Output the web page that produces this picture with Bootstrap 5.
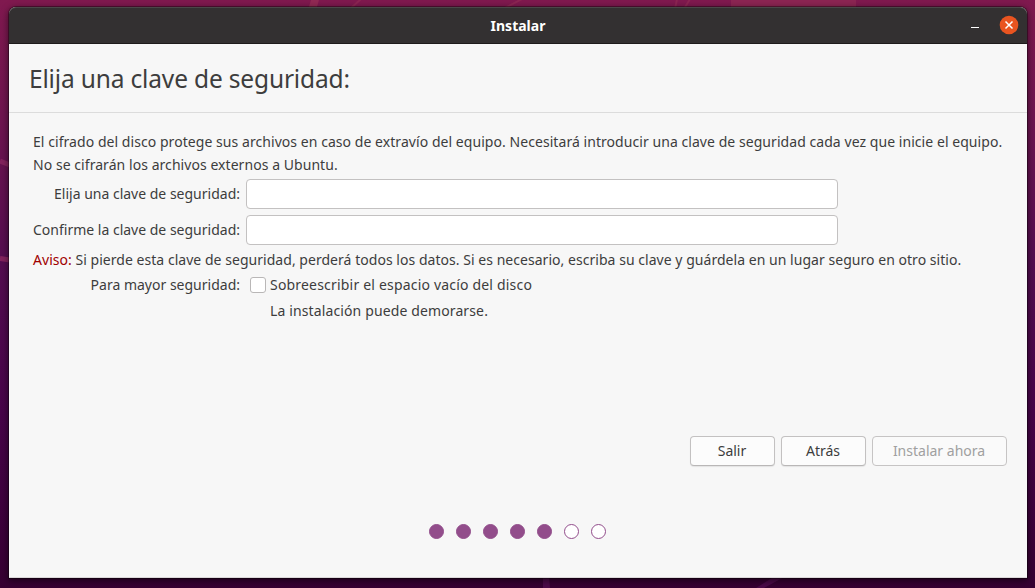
<!DOCTYPE html>
<html lang="es">
<head>
<meta charset="utf-8">
<meta name="viewport" content="width=device-width, initial-scale=1">
<title>Instalar</title>
<link href="https://cdn.jsdelivr.net/npm/bootstrap@5.3.0/dist/css/bootstrap.min.css" rel="stylesheet">
<style>
  body { height: 588px; padding: 7px 8px 10px 9px; font: 14px/23px "Noto Sans", "Open Sans", sans-serif; color: #3d3d3d; background: #35002f; }
  .wallpaper { inset: 0; width: 1035px; height: 588px; }
  .installer { background: #f7f7f7; border-radius: 7px 7px 0 0; border-bottom: 1px solid #dcd8da; box-shadow: 0 0 0 1px rgba(0,0,0,.35), 0 2px 7px 1px rgba(0,0,0,.5); }
  .titlebar { height: 37px; background: #333031; border-top: 1px solid #4a4748; border-bottom: 1px solid #1e1b1c; border-radius: 7px 7px 0 0; color: #fff; }
  .titlebar-name { font-size: 14px; font-weight: 700; }
  .window-controls { right: 9px; top: 8px; gap: 20px; }
  .page-heading { height: 69px; padding: 1px 20px 0; border-bottom: 1px solid #dcdcdc; }
  .page-heading h1 { font-size: 24.5px; line-height: 34px; font-weight: 400; letter-spacing: -.16px; }
  .page-body { padding: 17px 24px 0; }
  .form-line { height: 30px; margin-bottom: 6px; }
  .line-label { width: 207px; margin-right: 6px; padding-bottom: 2px; text-align: right; white-space: nowrap; }
  .form-line .form-control { width: 592px; height: 30px; min-height: 0; padding: 2px 8px; border: 1px solid #c3c1c1; border-radius: 4px; }
  .option-line { height: 25px; }
  .option-line .line-label { padding-bottom: 0; }
  .form-check-input.tick { width: 16px; height: 16px; margin: 0 4px; border: 1px solid #b9b7b7; border-radius: 3px; }
  .note { padding-left: 237px; height: 26px; padding-top: 2px; letter-spacing: .125px; }
  .actions { margin-top: 113px; padding-right: 20px; gap: 6px; }
  .action-btn { width: 85px; height: 30px; padding: 0 1px 0 0; font-size: 14px; line-height: 26px; color: #3d3d3d; background: #fcfcfc; border: 1px solid #c3c1c1; border-bottom-color: #b9b7b7; border-radius: 4px; box-shadow: 0 1px 1px rgba(0,0,0,.08); }
  .action-btn.wide { width: 135px; }
  .action-btn:disabled { color: #a0a0a0; background: #fafafa; border-color: #c6c4c4; opacity: 1; box-shadow: none; }
  .steps { margin-top: 58px; padding-right: 2px; gap: 12px; }
  .step { width: 15px; height: 15px; border: 1px solid #924d8b; background: #fff; }
  .step.done { background: #924d8b; }
  .warn { color: #a00000; }
  .t-intro, .t-warn, .t-opt { white-space: nowrap; }
  .t-intro { letter-spacing: .056px; margin-bottom: 3px; }
  .t-warn { letter-spacing: .037px; margin: -3px 0 1px; }
  .t-opt { letter-spacing: .19px; }
</style>
</head>
<body class="overflow-hidden">
<svg class="wallpaper position-absolute" viewBox="0 0 1035 588" aria-hidden="true">
  <defs>
    <linearGradient id="sky" x1="0" y1="0" x2="0" y2="1">
      <stop offset="0" stop-color="#80194f"/><stop offset=".2" stop-color="#6f1550"/>
      <stop offset=".45" stop-color="#540d50"/><stop offset=".7" stop-color="#48044a"/><stop offset="1" stop-color="#360032"/>
    </linearGradient>
  </defs>
  <path d="M0 0H1035V588H0Z" fill="url(#sky)"/>
  <path d="M731 0H856V10H731Z" fill="#8d2553"/>
  <path d="M311 0H319L316 10H308Z" fill="#922954"/>
  <path d="M361 -1 350 9M522 -1 503 9M677 -1 675 9M690 -1 684 9" stroke="#8d2553" stroke-width="2"/>
  <path d="M0 161 10 165M0 258.500 10 260" stroke="#84235e" stroke-width="5" fill="none"/>
  <path d="M775 576H786L764 588H756ZM543 576H549L550 588H543Z" fill="#4c0a49"/>
</svg>
<main class="installer position-relative h-100 d-flex flex-column">
  <header class="titlebar position-relative d-flex align-items-center justify-content-center">
    <span class="titlebar-name">Instalar</span>
    <div class="window-controls position-absolute d-flex">
      <svg width="10" height="18" viewBox="0 0 10 18" role="img" aria-label="Minimizar"><path d="M1 11H9V12H1Z" fill="#fff"/></svg>
      <svg width="18" height="18" viewBox="0 0 18 18" overflow="visible" role="img" aria-label="Cerrar"><circle cx="9" cy="9" r="9.300" fill="#e95420"/><path d="M5.500 5.500 12.500 12.500M12.500 5.500 5.500 12.500" stroke="#fff" stroke-width="1.500"/></svg>
    </div>
  </header>
  <div class="page-heading d-flex align-items-center">
    <h1 class="m-0">Elija una clave de seguridad:</h1>
  </div>
  <div class="page-body">
    <p class="t-intro">El cifrado del disco protege sus archivos en caso de extravío del equipo. Necesitará introducir una clave de seguridad cada vez que inicie el equipo.<br>No se cifrarán los archivos externos a Ubuntu.</p>
    <div class="form-line d-flex align-items-center">
      <label class="line-label" for="key">Elija una clave de seguridad:</label>
      <input class="form-control" id="key" type="password">
    </div>
    <div class="form-line d-flex align-items-center">
      <label class="line-label" for="key2">Confirme la clave de seguridad:</label>
      <input class="form-control" id="key2" type="password">
    </div>
    <p class="t-warn"><span class="warn">Aviso:</span> Si pierde esta clave de seguridad, perderá todos los datos. Si es necesario, escriba su clave y guárdela en un lugar seguro en otro sitio.</p>
    <div class="option-line d-flex align-items-center">
      <span class="line-label">Para mayor seguridad:</span>
      <input class="form-check-input tick" id="wipe" type="checkbox">
      <label class="t-opt" for="wipe">Sobreescribir el espacio vacío del disco</label>
    </div>
    <div class="note">La instalación puede demorarse.</div>
  </div>
  <div class="actions d-flex justify-content-end">
    <button class="btn action-btn" type="button">Salir</button>
    <button class="btn action-btn" type="button">Atrás</button>
    <button class="btn action-btn wide" type="button" disabled>Instalar ahora</button>
  </div>
  <div class="steps d-flex justify-content-center">
    <span class="step done rounded-circle"></span><span class="step done rounded-circle"></span><span class="step done rounded-circle"></span><span class="step done rounded-circle"></span><span class="step done rounded-circle"></span><span class="step rounded-circle"></span><span class="step rounded-circle"></span>
  </div>
</main>
<script src="https://cdn.jsdelivr.net/npm/bootstrap@5.3.0/dist/js/bootstrap.bundle.min.js"></script>
</body>
</html>
